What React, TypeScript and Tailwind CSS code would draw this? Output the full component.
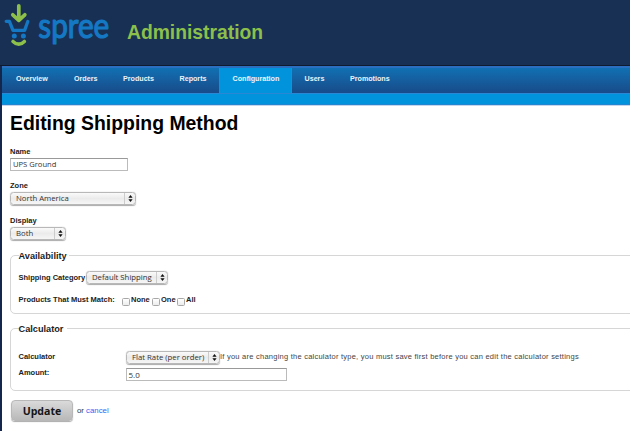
import React from 'react';

const helvetica = "font-['Liberation_Sans',Arial,sans-serif]";
const lucida = "font-['Open_Sans','Noto_Sans',sans-serif]";

function Logo() {
  return (
    <svg className="h-[60px] w-[112px] shrink-0 overflow-visible" viewBox="0 0 112 60" fill="none" strokeLinecap="round" strokeLinejoin="round">
      <path d="M6.2 21.3H9.4L13 30.4H24.6L27.8 21.5" stroke="#1478c4" strokeWidth="3.3" />
      <path d="M18.8 5.8V19.5M12.8 14.8L18.8 20.3L24.8 14.8" stroke="#8cc04b" strokeWidth="3.7" />
      <circle cx="14.3" cy="36" r="2.5" fill="#1478c4" />
      <circle cx="23.4" cy="36" r="2.5" fill="#1478c4" />
      <path d="M13 41.4Q18.8 47 24.4 41.4" stroke="#8cc04b" strokeWidth="3.5" />
      <text
        x="38.3"
        y="37.8"
        textLength="71"
        lengthAdjust="spacingAndGlyphs"
        fill="#1478c4"
        stroke="#1478c4"
        strokeWidth="1.2"
        className="font-['Lato',sans-serif] text-[34px] leading-none"
      >
        spree
      </text>
    </svg>
  );
}

const tabs = [
  { label: 'Overview', cls: 'w-[58px] pl-[14px]' },
  { label: 'Orders', cls: 'w-[49px] pl-[14px]' },
  { label: 'Products', cls: 'w-[57px] pl-[14px]' },
  { label: 'Reports', cls: 'w-[53px] pl-[13.5px]' },
  { label: 'Configuration', cls: 'w-[73px] pl-[12.5px] bg-[#0194dd] border-x border-[#2a87d4]' },
  { label: 'Users', cls: 'w-[44px] pl-[12.5px]' },
  { label: 'Promotions', cls: 'w-[64px] pl-[14px]' },
];

function Select({ value, className }: { value: string; className: string }) {
  return (
    <div
      className={`flex h-[13px] shrink-0 rounded-[3.5px] border border-[#b8b8b8] bg-linear-to-b from-[#fafafa] via-[#ebebeb] to-[#f6f6f6] shadow-[0_0.5px_1px_#aaa] ${className}`}
    >
      <span className={`${lucida} flex-1 pl-[5px] text-[7.75px] leading-[10px] whitespace-nowrap text-[#333]`}>{value}</span>
      <span className="flex w-[11px] items-center justify-center border-l border-[#cccccc]">
        <svg className="h-[7px] w-[5px]" viewBox="0 0 5 7" fill="#111">
          <path d="M2.5 0L4.6 2.8H0.4ZM2.5 7L4.6 4.2H0.4Z" />
        </svg>
      </span>
    </div>
  );
}

function Label({ children, className = '' }: { children: React.ReactNode; className?: string }) {
  return <div className={`h-[10px] shrink-0 text-[7.5px] leading-[11px] font-bold whitespace-nowrap text-[#222] ${className}`}>{children}</div>;
}

function Group({ title, className, titleClass, children }: { title: string; className: string; titleClass: string; children: React.ReactNode }) {
  return (
    <section className={`-mr-2 rounded-[5px] border border-[#d6d6d6] pl-[7.5px] ${className}`}>
      <h2 className={`-mt-[6px] h-[11px] bg-white text-[9.2px] leading-[12px] font-bold whitespace-nowrap text-[#1c1c1c] ${titleClass}`}>
        {title}
      </h2>
      {children}
    </section>
  );
}

function Choice({ label, className }: { label: string; className: string }) {
  return (
    <div className={`flex ${className}`}>
      <span className="mt-[4px] mr-[1px] h-[8px] w-[8px] shrink-0 rounded-[1.5px] border border-[#a8a8a8] bg-linear-to-b from-white to-[#ececec]" />
      <Label>{label}</Label>
    </div>
  );
}

export default function App() {
  return (
    <div className={`${helvetica} h-[431px] w-[630px] overflow-hidden bg-white`}>
      <header className="flex h-[66px] border-b border-[#101b30] bg-[#183054]">
        <Logo />
        <h1 className="ml-[15px] pt-[21px] text-[19.3px] leading-[24px] font-bold text-[#8cc04b]">Administration</h1>
      </header>

      <div className="h-[365px] border-l-2 border-[#14264c]">
        <nav className="flex h-[28px] border-t-2 border-b border-t-[#2b6fc0] border-b-[#2a87d4] bg-linear-to-b from-[#1070b3] to-[#174b89]">
          {tabs.map((tab) => (
            <a key={tab.label} className={`h-full shrink-0 text-[7.15px] leading-[23px] font-bold whitespace-nowrap text-[#edf4fa] ${tab.cls}`}>
              {tab.label}
            </a>
          ))}
        </nav>
        <div className="h-[11px] border-b border-[#2386d3] bg-[#0194dd]" />
        <div className="h-px bg-[#c3d6ec]" />

        <main className="pl-[8px]">
          <h1 className="h-[40px] pt-[5px] text-[19.4px] leading-[24px] font-bold whitespace-nowrap text-black">Editing Shipping Method</h1>

          <Label>Name</Label>
          <div className={`${lucida} mt-[2px] h-[13px] w-[118px] border border-[#bbb] border-t-[#999] pl-[2px] text-[7.6px] leading-[11px] text-[#333]`}>
            UPS Ground
          </div>

          <Label className="mt-[9px]">Zone</Label>
          <Select value="North America" className="mt-[2px] w-[126px]" />

          <Label className="mt-[10px]">Display</Label>
          <Select value="Both" className="mt-[2px] w-[56px]" />

          <Group title="Availability" className="mt-[15px] h-[59px]" titleClass="w-[50px]">
            <div className="mt-[10px] flex">
              <Label className="mt-[1px] w-[67.5px]">Shipping Category</Label>
              <Select value="Default Shipping" className="w-[82px]" />
            </div>
            <div className="mt-[10px] flex">
              <Label className="w-[103.5px]">Products That Must Match:</Label>
              <Choice label="None" className="w-[30px]" />
              <Choice label="One" className="w-[25px]" />
              <Choice label="All" className="" />
            </div>
          </Group>

          <Group title="Calculator" className="mt-[14px] h-[63px]" titleClass="w-[48px]">
            <div className="mt-[17px] flex">
              <Label className="w-[107.5px]">Calculator</Label>
              <Select value="Flat Rate (per order)" className="w-[94px]" />
              <p className="text-[7.5px] leading-[11px] tracking-[0.24px] whitespace-nowrap text-[#444]">
                If you are changing the calculator type, you must save first before you can edit the calculator settings
              </p>
            </div>
            <div className="mt-[4px] flex">
              <Label className="-mt-px w-[107px]">Amount:</Label>
              <div className={`${lucida} h-[13px] w-[161px] border border-[#bbb] border-t-[#999] pl-[2px] text-[8px] leading-[11px] text-[#333]`}>5.0</div>
            </div>
          </Group>

          <div className="mt-[9px] flex">
            <button
              className={`${lucida} ml-[1px] h-[21px] w-[62px] rounded-[4px] border border-[#b8b8b8] bg-linear-to-b from-[#dadada] to-[#b9b9b9] text-[10.6px] leading-[18px] font-bold text-[#151515] shadow-[0_1px_1px_#aaa]`}
            >
              Update
            </button>
            <p className="mt-[6px] ml-[4px] text-[7.8px] leading-[10px] text-[#333]">
              or <a className="text-[#2f66f5]">cancel</a>
            </p>
          </div>
        </main>
      </div>
    </div>
  );
}
